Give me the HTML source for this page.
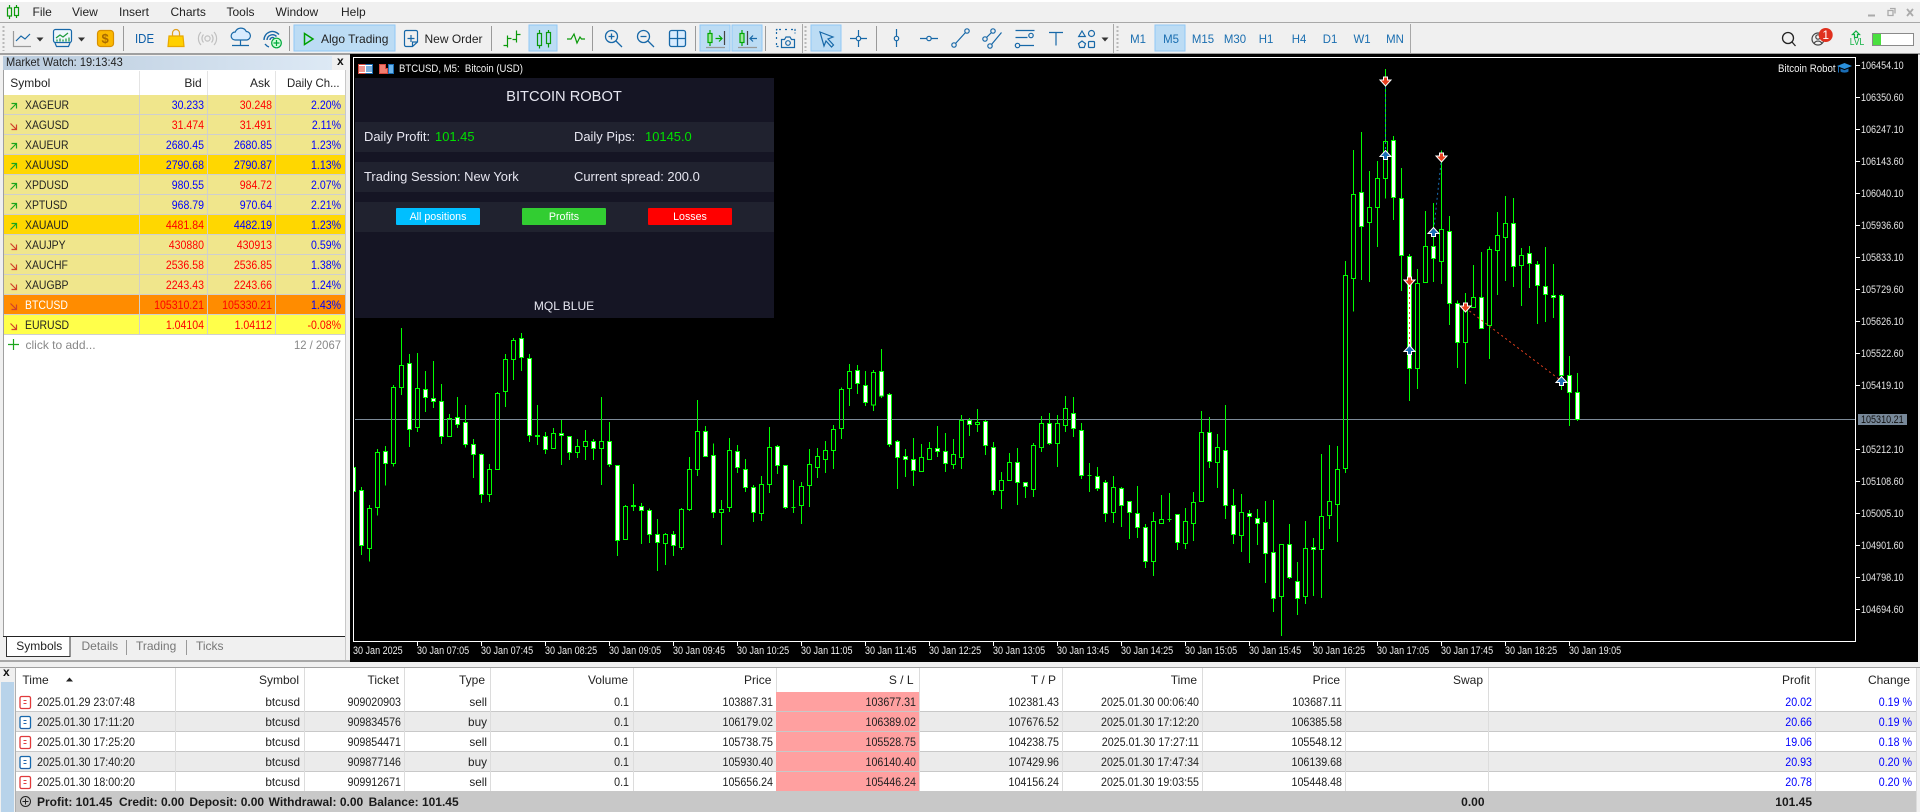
<!DOCTYPE html>
<html><head><meta charset="utf-8"><title>MetaTrader</title>
<style>
html,body{margin:0;padding:0;background:#f0f0f0}
body{position:relative;width:1920px;height:812px;overflow:hidden;font:12px "Liberation Sans",sans-serif;color:#222}
svg.g{position:absolute;left:0;top:0}
i{position:absolute;font-style:normal;white-space:nowrap;line-height:20px;height:20px;transform:scaleX(var(--s,1));transform-origin:0 0}
i.e{transform:translateX(-100%) scaleX(var(--s,1));transform-origin:100% 0}
i.ct{transform:translateX(-50%) scaleX(var(--s,1));transform-origin:50% 0}
.rw{position:absolute;left:0;width:1920px;height:20px}
.u{color:#0000ff}.d{color:#ff0000}
.m i{--s:.88}
.m .y{left:25px;--s:.87}
.c1{left:203.7px}.c2{left:272px}.c3{left:341px}
.t i{--s:.89}
.t0{left:37px}.t1{left:300.4px;--s:.98!important}.t2{left:401px}.t3{left:487px;--s:.98!important}.t4{left:629px}.t5{left:773px}.t6{left:916px}.t7{left:1059px}.t8{left:1199px}.t9{left:1341.6px}.t10{left:1812px}.t11{left:1912px}
.x{top:643.5px;line-height:14px;height:14px;font-size:11px;--s:.82;color:#eee}
.p{left:1861px;line-height:14px;height:14px;font-size:11px;--s:.82;color:#e4e4e4}
.h{top:670px;color:#222}
.tf{top:29px;color:#1a6eb0;--s:.95}
.pn{font-size:13.33px;color:#e6e6f0;--s:.97}
.gn{color:#00e000}
.btn{font-size:10.67px;color:#fff;top:206.5px}
.f{top:792px;font-weight:bold;color:#1a1a1a}
.tb{top:29px;color:#222}
.mn{top:2px;color:#222}
</style></head><body>
<svg class="g" width="1920" height="812" viewBox="0 0 1920 812" xmlns="http://www.w3.org/2000/svg">
<defs>
<linearGradient id="tg" x1="0" x2="1" y1="0" y2="0"><stop offset="0" stop-color="#b9cbdd"/><stop offset="1" stop-color="#dde9f5"/></linearGradient>
<path id="mdn" d="M-2-4.5h4v3h3.5L0 4.5-5.5-1.5H-2z" fill="#e8401f" stroke="#fff"/>
<path id="mup" d="M-2 4.5h4v-3h3.5L0-4.5-5.5 1.5H-2z" fill="#1a6db5" stroke="#fff"/>
</defs>
<!-- chrome -->
<rect width="1920" height="812" fill="#f0f0f0"/>
<rect width="1920" height="2" fill="#fff"/>
<rect y="22" width="1920" height="1" fill="#a8a8a8"/>
<rect y="53" width="1920" height="2" fill="#a0a0a0"/>
<rect x="294" y="25" width="101" height="26" fill="#bcdcf4" stroke="#90c8f6"/>
<rect x="529" y="25" width="28" height="26" fill="#bcdcf4" stroke="#90c8f6"/>
<rect x="700" y="25" width="30" height="26" fill="#bcdcf4" stroke="#90c8f6"/>
<rect x="732" y="25" width="30" height="26" fill="#bcdcf4" stroke="#90c8f6"/>
<rect x="811" y="25" width="30" height="26" fill="#bcdcf4" stroke="#90c8f6"/>
<rect x="1155" y="25" width="30" height="26" fill="#bcdcf4" stroke="#90c8f6"/>
<path d="M123.5 26v25M289.5 26v25M491.5 26v25M592.5 26v25M695.5 26v25M765.5 26v25M876.5 26v25" stroke="#9a9a9a" fill="none"/>
<path d="M802.5 24v29M1113.5 24v29M1410.5 24v29" stroke="#a8a8a8" fill="none"/>
<path d="M3.5 26v25M805.5 26v25M1117.5 26v25" stroke="#b8b8b8" stroke-width="2" stroke-dasharray="2 2" fill="none"/>
<!-- left panel -->
<rect x="3" y="56" width="329" height="14" fill="url(#tg)"/>
<rect x="3" y="70" width="343" height="566" fill="#fff"/>
<rect x="3" y="70" width="1" height="566" fill="#a0a0a0"/>
<rect x="345" y="70" width="1" height="590" fill="#c8c8c8"/>
<rect x="139" y="71" width="1" height="24" fill="#e4e4e4"/><rect x="207" y="71" width="1" height="24" fill="#e4e4e4"/><rect x="275" y="71" width="1" height="24" fill="#e4e4e4"/>
<g shape-rendering="crispEdges">
<rect x="4" y="95" width="341" height="240" fill="#f0e68c"/>
<rect x="4" y="155" width="341" height="20" fill="#ffd700"/>
<rect x="4" y="215" width="341" height="20" fill="#ffd700"/>
<rect x="4" y="295" width="341" height="20" fill="#ff8c00"/>
<rect x="4" y="315" width="341" height="20" fill="#ffff4a"/>
<path d="M4 114.5h341M4 134.5h341M4 154.5h341M4 174.5h341M4 194.5h341M4 214.5h341M4 234.5h341M4 254.5h341M4 274.5h341M4 294.5h341M4 314.5h341M4 334.5h341M139.5 95v240M207.5 95v240M275.5 95v240" stroke="#cfcfcf" fill="none"/>
</g>
<g fill="none" stroke-width="1.2">
<path stroke="#1ca51c" d="M10.5 109.5l6-6M11.5 103.5h5v5M10.5 169.5l6-6M11.5 163.5h5v5M10.5 229.5l6-6M11.5 223.5h5v5M10.5 149.5l6-6M11.5 143.5h5v5M10.5 189.5l6-6M11.5 183.5h5v5M10.5 209.5l6-6M11.5 203.5h5v5"/>
<path stroke="#d0412a" d="M10.5 123.5l6 6M11.5 129.5h5v-5M10.5 243.5l6 6M11.5 249.5h5v-5M10.5 263.5l6 6M11.5 269.5h5v-5M10.5 283.5l6 6M11.5 289.5h5v-5M10.5 303.5l6 6M11.5 309.5h5v-5M10.5 323.5l6 6M11.5 329.5h5v-5"/>
</g>
<path d="M13.5 339v11M8 344.5h11" stroke="#1ca51c" fill="none" stroke-width="1.2"/>
<!-- tabs -->
<rect x="3" y="636" width="342" height="1" fill="#222"/>
<rect x="7" y="637" width="63" height="19" fill="#fff"/>
<path d="M6.5 636v20.5h63.5V636" stroke="#333" fill="none"/>
<path d="M126.5 640v15M186.5 640v15" stroke="#999"/>
<rect x="0" y="660" width="350" height="2" fill="#a8a8a8"/>
<!-- chart -->
<rect x="350" y="54" width="1568" height="608" fill="#000"/>
<rect x="355" y="419" width="1500" height="1" fill="#7c8a98"/>
<g transform="translate(352,310) scale(.333333)" shape-rendering="crispEdges">
<path stroke="#00ff00" stroke-width="3" fill="none" d="M28.5 531V735M52.5 585V755M76.5 417V617M100.5 408V527M124.5 225V470M148.5 54V255M172.5 132V411M196.5 129V366M220.5 183V306M244.5 153V294M268.5 222V402M292.5 312V380M316.5 261V354M340.5 285V413M364.5 387V504M388.5 430V579M412.5 462V576M436.5 246V479M460.5 132V291M484.5 84V210M508.5 69V183M532.5 132V396M556.5 285V405M580.5 366V432M604.5 354V416M628.5 330V465M652.5 379V450M676.5 387V444M700.5 360V450M724.5 387V450M748.5 261V525M772.5 336V471M796.5 466V738M820.5 585V689M844.5 522V603M868.5 579V702M892.5 595V699M916.5 627V783M940.5 669V765M964.5 663V738M988.5 594V720M1012.5 441V603M1036.5 270V498M1060.5 348V440M1084.5 400V624M1108.5 570V705M1132.5 384V606M1156.5 405V489M1180.5 447V546M1204.5 525V636M1228.5 498V633M1252.5 351V549M1276.5 405V492M1300.5 466V597M1324.5 510V609M1348.5 516V642M1372.5 417V591M1396.5 414V504M1420.5 393V489M1444.5 345V477M1468.5 232V387M1492.5 162V288M1516.5 165V252M1540.5 183V288M1564.5 180V303M1588.5 117V264M1612.5 249V411M1636.5 390V537M1660.5 417V501M1684.5 384V528M1708.5 402V485M1732.5 396V449M1756.5 348V441M1780.5 369V486M1804.5 387V477M1828.5 315V477M1852.5 324V378M1876.5 297V366M1900.5 330V435M1924.5 396V555M1948.5 486V597M1972.5 429V512M1996.5 414V585M2020.5 517V564M2044.5 399V561M2068.5 318V426M2092.5 309V405M2116.5 315V471M2140.5 258V366M2164.5 261V381M2188.5 339V507M2212.5 459V546M2236.5 471V543M2260.5 510V636M2284.5 498V639M2308.5 531V651M2332.5 574V687M2356.5 528V684M2380.5 642V774M2404.5 606V798M2428.5 555V641M2452.5 549V636M2476.5 613V720M2500.5 594V717M2524.5 546V693M2548.5 303V575M2572.5 321V474M2596.5 372V534M2620.5 285V627M2644.5 537V702M2668.5 552V726M2692.5 600V759M2716.5 597V705M2740.5 573V819M2764.5 570V906M2788.5 703V978M2812.5 642V807M2836.5 756V915M2860.5 633V882M2884.5 684V858M2908.5 432V864M2932.5 405V657M2956.5 408V696M2980.5 -147V489M3004.5 -480V5M3028.5 -534V-90M3052.5 -417V-84M3076.5 -447V-189M3100.5 -723V-335M3124.5 -522V-270M3148.5 -426V-57M3172.5 -168V273M3196.5 -123V237M3220.5 -297V-82M3244.5 -321V-84M3268.5 -479V-78M3292.5 -282V45M3316.5 -29V174M3340.5 -51V222M3364.5 -135V-8M3388.5 -174V55M3412.5 -191V147M3436.5 -294V-45M3460.5 -342V-87M3484.5 -336V-69M3508.5 -186V-12M3532.5 -192V-66M3556.5 -147V42M3580.5 -189V36M3604.5 -138V24M3628.5 -48V240M3652.5 138V348M3676.5 189V333"/>
<path fill="#000" stroke="#00ff00" stroke-width="3" d="M46.5 595h12V716h-12zM70.5 427h12V593h-12zM118.5 232h12V461h-12zM142.5 166h12V233h-12zM190.5 235h12V353h-12zM286.5 325h12V380h-12zM406.5 478h12V554h-12zM430.5 250h12V479h-12zM454.5 148h12V245h-12zM478.5 91h12V149h-12zM598.5 370h12V416h-12zM670.5 409h12V428h-12zM694.5 394h12V410h-12zM742.5 394h12V416h-12zM814.5 589h12V689h-12zM934.5 673h12V701h-12zM982.5 598h12V713h-12zM1006.5 478h12V599h-12zM1030.5 364h12V479h-12zM1102.5 598h12V608h-12zM1126.5 421h12V593h-12zM1222.5 523h12V611h-12zM1246.5 412h12V524h-12zM1342.5 529h12V587h-12zM1366.5 463h12V527h-12zM1390.5 439h12V473h-12zM1414.5 421h12V449h-12zM1438.5 358h12V422h-12zM1462.5 238h12V356h-12zM1486.5 184h12V236h-12zM1558.5 187h12V285h-12zM1702.5 442h12V485h-12zM1726.5 415h12V449h-12zM1798.5 433h12V464h-12zM1822.5 331h12V443h-12zM1870.5 337h12V344h-12zM1942.5 511h12V542h-12zM1966.5 457h12V512h-12zM2038.5 406h12V539h-12zM2062.5 340h12V413h-12zM2110.5 340h12V401h-12zM2134.5 295h12V347h-12zM2278.5 532h12V608h-12zM2398.5 634h12V755h-12zM2422.5 628h12V641h-12zM2494.5 634h12V701h-12zM2518.5 577h12V641h-12zM2542.5 367h12V575h-12zM2590.5 412h12V458h-12zM2662.5 607h12V677h-12zM2782.5 703h12V860h-12zM2854.5 715h12V860h-12zM2902.5 619h12V719h-12zM2926.5 574h12V617h-12zM2950.5 478h12V584h-12zM2974.5 -104h12V476h-12zM2998.5 -347h12V-95h-12zM3046.5 -308h12V-263h-12zM3070.5 -395h12V-307h-12zM3094.5 -506h12V-395h-12zM3190.5 -80h12V175h-12zM3214.5 -191h12V-82h-12zM3262.5 -242h12V-146h-12zM3334.5 -8h12V97h-12zM3358.5 -38h12V-8h-12zM3406.5 -182h12V46h-12zM3430.5 -224h12V-179h-12zM3454.5 -260h12V-218h-12zM3502.5 -164h12V-134h-12z"/>
<path d="M120 328.5h9M192 328.5h9M288 328.5h9M432 328.5h9M1464 328.5h9M2136 328.5h9M2976 328.5h9" stroke="#7c8a98" stroke-width="3" fill="none"/>
<path fill="#fff" stroke="#00ff00" stroke-width="3" d="M-1.5 472h12V544h-12zM22.5 541h12V707h-12zM94.5 424h12V461h-12zM166.5 160h12V359h-12zM214.5 238h12V263h-12zM238.5 265h12V275h-12zM262.5 274h12V380h-12zM310.5 322h12V344h-12zM334.5 337h12V404h-12zM358.5 403h12V434h-12zM382.5 433h12V554h-12zM502.5 85h12V143h-12zM526.5 145h12V377h-12zM550.5 376h12V380h-12zM574.5 379h12V419h-12zM622.5 370h12V377h-12zM646.5 379h12V428h-12zM718.5 394h12V416h-12zM766.5 394h12V464h-12zM790.5 466h12V692h-12zM838.5 586h12V590h-12zM862.5 589h12V602h-12zM886.5 601h12V674h-12zM910.5 673h12V698h-12zM958.5 673h12V707h-12zM1054.5 364h12V440h-12zM1078.5 436h12V608h-12zM1150.5 424h12V473h-12zM1174.5 478h12V533h-12zM1198.5 532h12V608h-12zM1270.5 409h12V467h-12zM1294.5 466h12V593h-12zM1318.5 592h12V592h-12zM1510.5 181h12V221h-12zM1534.5 226h12V278h-12zM1582.5 184h12V258h-12zM1606.5 253h12V404h-12zM1630.5 394h12V443h-12zM1654.5 439h12V449h-12zM1678.5 448h12V482h-12zM1750.5 415h12V425h-12zM1774.5 424h12V461h-12zM1846.5 331h12V344h-12zM1894.5 334h12V407h-12zM1918.5 412h12V542h-12zM1990.5 457h12V518h-12zM2014.5 517h12V530h-12zM2086.5 340h12V401h-12zM2158.5 310h12V356h-12zM2182.5 361h12V497h-12zM2206.5 496h12V496h-12zM2230.5 499h12V536h-12zM2254.5 517h12V611h-12zM2302.5 535h12V587h-12zM2326.5 574h12V608h-12zM2350.5 610h12V653h-12zM2374.5 652h12V755h-12zM2446.5 629h12V629h-12zM2470.5 613h12V698h-12zM2566.5 367h12V455h-12zM2614.5 421h12V587h-12zM2638.5 586h12V674h-12zM2686.5 610h12V620h-12zM2710.5 625h12V641h-12zM2734.5 637h12V731h-12zM2758.5 727h12V866h-12zM2806.5 703h12V803h-12zM2830.5 814h12V866h-12zM2878.5 712h12V719h-12zM3022.5 -353h12V-251h-12zM3118.5 -509h12V-337h-12zM3142.5 -335h12V-163h-12zM3166.5 -161h12V175h-12zM3238.5 -191h12V-155h-12zM3286.5 -236h12V-20h-12zM3310.5 -20h12V97h-12zM3382.5 -38h12V55h-12zM3478.5 -260h12V-131h-12zM3526.5 -170h12V-140h-12zM3550.5 -137h12V-74h-12zM3574.5 -71h12V-47h-12zM3598.5 -44h12V-38h-12zM3622.5 -44h12V196h-12zM3646.5 196h12V247h-12zM3670.5 248h12V329h-12z"/>
</g>
<!-- trades -->
<g fill="none" stroke-dasharray="2 3">
<path stroke="#1a6db5" d="M1385.5 82V155M1441.5 158L1433.5 232"/>
<path stroke="#e8401f" d="M1409.5 282V350M1465.5 308L1561.5 381"/>
</g>
<use href="#mdn" x="1385.5" y="81.5"/><use href="#mup" x="1385.5" y="155"/>
<use href="#mdn" x="1441.5" y="157.5"/><use href="#mup" x="1433.5" y="232"/>
<use href="#mdn" x="1409.5" y="281.5"/><use href="#mup" x="1409.5" y="350"/>
<use href="#mdn" x="1465.5" y="307.5"/><use href="#mup" x="1561.5" y="381"/>
<rect x="350" y="54" width="4" height="608" fill="#000"/>
<rect x="353.5" y="57.5" width="1502" height="584" fill="none" stroke="#fff"/>
<path stroke="#fff" fill="none" d="M1856 65.5h4M1856 97.5h4M1856 129.5h4M1856 161.5h4M1856 193.5h4M1856 225.5h4M1856 257.5h4M1856 289.5h4M1856 321.5h4M1856 353.5h4M1856 385.5h4M1856 449.5h4M1856 481.5h4M1856 513.5h4M1856 545.5h4M1856 577.5h4M1856 609.5h4M417.5 642v4M481.5 642v4M545.5 642v4M609.5 642v4M673.5 642v4M737.5 642v4M801.5 642v4M865.5 642v4M929.5 642v4M993.5 642v4M1057.5 642v4M1121.5 642v4M1185.5 642v4M1249.5 642v4M1313.5 642v4M1377.5 642v4M1441.5 642v4M1505.5 642v4M1569.5 642v4"/>
<rect x="1858" y="414" width="49" height="11" fill="#778899"/>
<!-- panel -->
<rect x="355" y="78" width="419" height="240" fill="#151524"/>
<rect x="355" y="122" width="419" height="30" fill="#20222f"/>
<rect x="355" y="162" width="419" height="30" fill="#20222f"/>
<rect x="355" y="202" width="419" height="30" fill="#20222f"/>
<rect x="396" y="208" width="84" height="17" rx="1" fill="#00bfff"/>
<rect x="522" y="208" width="84" height="17" rx="1" fill="#32cd32"/>
<rect x="648" y="208" width="84" height="17" rx="1" fill="#ff0000"/>
<!-- chart title icons -->
<rect x="358.5" y="64.5" width="14" height="9" fill="#fff" stroke="#d84a3e"/>
<path d="M365.5 64.5h7v9h-7" fill="#fff" stroke="#1a6db5"/>
<path d="M359 67h6M359 69h6M359 71h6" stroke="#e8584a" stroke-width="1.2"/><path d="M366 67h6M366 69h6M366 71h6" stroke="#2a80c8" stroke-width="1.2"/>
<path d="M379.5 64.5h6v4h2v5h-8z" fill="#f27e70" stroke="#d84a3e"/>
<path d="M388.5 64.5h5v9h-5z" fill="#6ab4ec" stroke="#1a6db5"/>
<path d="M1837 66l7.5-3 7.5 3-7.5 3z" fill="#2a90dc"/><path d="M1840.5 68.5v3c2 1.5 6 1.5 8 0v-3l-4 1.6z" fill="#1a6db5"/><path d="M1838.5 66.5v6" stroke="#1a6db5"/>
<!-- bottom panel -->
<rect x="0" y="667" width="1920" height="1" fill="#a0a0a0"/>
<rect x="15" y="668" width="1902" height="144" fill="#fff"/>
<rect x="15" y="667" width="1" height="145" fill="#b0b0b0"/>
<rect x="1" y="682" width="13" height="130" fill="#b8d3ea"/>
<g shape-rendering="crispEdges">
<rect x="16" y="712" width="1900" height="20" fill="#ebebeb"/>
<rect x="16" y="752" width="1900" height="20" fill="#ebebeb"/>
<rect x="776" y="692" width="144" height="99" fill="#ffa0a0"/>
<path d="M16 711.5h1900M16 731.5h1900M16 751.5h1900M16 771.5h1900" stroke="#c8c8c8"/>
<path d="M175.5 668v123M304.5 668v123M404.5 668v123M490.5 668v123M633.5 668v123M776.5 668v24M919.5 668v123M1062.5 668v123M1202.5 668v123M1345.5 668v123M1488.5 668v123M1815.5 668v123M1916.5 668v144" stroke="#dcdcdc"/>
<rect x="16" y="791" width="1900" height="21" fill="#c8c8c8"/>
</g>
<path d="M66 681.5l3.5-4 3.5 4z" fill="#222"/>
<g fill="#fff" stroke-width="1.3">
<g stroke="#e03a3a"><rect x="20" y="696.5" width="10.5" height="12" rx="1.5"/><rect x="20" y="736.5" width="10.5" height="12" rx="1.5"/><rect x="20" y="776.5" width="10.5" height="12" rx="1.5"/></g>
<g stroke="#1668ac"><rect x="20" y="716.5" width="10.5" height="12" rx="1.5"/><rect x="20" y="756.5" width="10.5" height="12" rx="1.5"/></g>
</g>
<path d="M23.5 700.5h3M23.5 703.5h3M23.5 740.5h3M23.5 743.5h3M23.5 780.5h3M23.5 783.5h3" stroke="#e03a3a"/>
<path d="M23.5 720.5h3M23.5 723.5h3M23.5 760.5h3M23.5 763.5h3" stroke="#1668ac"/>
<circle cx="25.5" cy="801.5" r="5" fill="none" stroke="#222"/><path d="M25.5 798.5v6M22.5 801.5h6" stroke="#222"/>
<!-- toolbar icons -->
<g fill="none" stroke-width="1.2">
<g stroke="#0a9a0a"><rect x="7.5" y="8" width="4" height="8"/><path d="M9.5 5v3M9.5 16v3"/><rect x="14.5" y="7.5" width="4" height="8"/><path d="M16.5 5v3M16.5 15v3"/></g>
<path d="M13.5 31v15.500H31" stroke="#9a9a9a"/><path d="M16 41l5-5 4 3 5-5" stroke="#1768a8"/>
<rect x="53.500" y="29.500" width="18" height="13" rx="2" fill="#eef6fc" stroke="#1768a8"/><path d="M55 43l1.500 3.500h12L70 43" stroke="#1768a8"/><path d="M56 38l4-3 3 2 5-4" stroke="#1a9a3a"/><path d="M57 41.500v-2M60 41.500v-3M63 41.500v-2M66 41.500v-3M69 41.500v-4" stroke="#1a9a3a"/>
<rect x="97.500" y="30.500" width="16" height="16" rx="3" fill="#fbb900" stroke="#d89000"/>
<path d="M169 36h14l1 10.500h-16z" fill="#ffd000" stroke="#e8a800"/><path d="M172.500 36v-3a3.500 3.500 0 0 1 7 0v3" stroke="#e0a020"/>
<g stroke="#c0c0c0"><circle cx="207.500" cy="38.500" r="2.600"/><path d="M203.500 34.500a6 6 0 0 0 0 8M211.500 34.500a6 6 0 0 1 0 8M201 32a9.500 9.500 0 0 0 0 13M214 32a9.500 9.500 0 0 1 0 13"/></g>
<path d="M235 40a4 4 0 0 1 .3-8 6 6 0 0 1 11-.5 4.300 4.300 0 0 1 .7 8.500z" fill="#d8ecff" stroke="#1768a8"/><path d="M240.500 40v5M232 45.500h17" stroke="#1768a8"/>
<path d="M264 40a8.500 8.500 0 0 1 15-5.500M267 40a5.500 5.500 0 0 1 9.500-3.500M270 40a2.500 2.500 0 0 1 4.200-1.800M265 44a9 9 0 0 0 4 3" stroke="#1768a8" stroke-width="1.400"/>
<circle cx="276.500" cy="43" r="4.800" fill="#d0ffd8" stroke="#00a83c"/><path d="M276.500 40v6M273.500 43h6" stroke="#00a83c"/>
<path d="M304.500 33.500v11l8.500-5.500z" stroke="#00a000" stroke-width="1.500"/>
<path d="M406 30.500h10a1.500 1.500 0 0 1 1.500 1.500v10l-5 4.500H406a1.500 1.500 0 0 1-1.500-1.500V32a1.500 1.500 0 0 1 1.500-1.500zM412.500 46.500v-4.500h5M411 35v7M407.500 38.500h7" stroke="#1768a8"/>
<g stroke="#0a9a0a"><path d="M507.500 35.500v12M503.500 45.500h4M507.500 38.500h4M516.500 30.500v12M512.500 39.500h4M516.500 34.500h4"/>
<rect x="537.500" y="33.500" width="4" height="12"/><path d="M539.500 30v3.500M539.500 45.500v3"/><rect x="546.500" y="32.500" width="4" height="11"/><path d="M548.500 30v2.500M548.500 43.500v4"/>
<path d="M567 39h4l3-5 3 9 3-6 1.500 2h3.500"/></g>
<g stroke="#1768a8" stroke-width="1.300"><circle cx="611.500" cy="36.500" r="6"/><path d="M616 41l6 6M608.500 36.500h6M611.500 33.500v6"/><circle cx="643.500" cy="36.500" r="6"/><path d="M648 41l6 6M640.500 36.500h6"/>
<rect x="669.500" y="30.500" width="16" height="16" rx="2" fill="#d8ecff"/><path d="M677.500 30.500v16M669.500 38.500h16"/></g>
<g stroke="#00a800"><rect x="708" y="33.500" width="4" height="9" fill="#9ee89e"/><path d="M710 30v3.500M710 42.500v3.500M715.500 38.500h6M719 35.500l3 3-3 3"/><rect x="740" y="33.500" width="4" height="9" fill="#9ee89e"/><path d="M742 30v3.500M742 42.500v3.500"/></g>
<path d="M724.500 31v14M747.500 31v14" stroke="#444"/><path d="M750 38.500h7M753 35.500l-3 3 3 3" stroke="#1768a8"/>
<path d="M706 47.500h19M738 47.500h19" stroke="#999"/>
<g stroke="#1768a8" stroke-width="1.200">
<path d="M776.500 34v-4.500H781M785 29.500h3M791 29.500h4v4M776.500 37v3M776.500 43v3.500h3" stroke-dasharray="2 1.500"/>
<path d="M781.500 39.500h3l1.500-2.500h4l1.500 2.500h3v8h-13z" fill="#f0f0f0"/><circle cx="788" cy="43" r="2.300"/>
<path d="M820 32l13 5-5 2 5.500 6-2 2-5.500-6-2 5z"/>
<path d="M858.500 30v6.500M858.500 41v6M850 38.500h6.500M861 38.500h6"/><circle cx="858.500" cy="38.500" r="2.200"/>
<path d="M896.500 29v7M896.500 41v6M920 38.500h7M931 38.500h7"/><circle cx="896.500" cy="38.500" r="2.200"/><circle cx="929" cy="38.500" r="2.200"/>
<path d="M955.500 43.500L965.500 32.500"/><circle cx="954" cy="45" r="2.200"/><circle cx="967" cy="31" r="2.200"/>
<path d="M986.500 37.500l5-5M991.500 44.500l10-12"/><circle cx="985" cy="39" r="2.200"/><circle cx="993" cy="31" r="2.200"/><circle cx="990" cy="46" r="2.200"/>
<path d="M1015.500 30.500h19M1015.500 37.500h12M1020 45.500h14"/><circle cx="1031" cy="35.500" r="2.200"/><circle cx="1017.500" cy="45.500" r="2.200"/>
<path d="M1049 32.500h14M1056 32.500v13"/>
<path d="M1082 31l3.300 5.500h-6.600z"/><circle cx="1091.500" cy="33.500" r="3"/><path d="M1082 41l3.500 2.600-1.300 3.900h-4.400l-1.300-3.900z"/><rect x="1088.500" y="41.500" width="6" height="6" rx="1"/>
</g>
<g stroke="#222" stroke-width="1.300"><circle cx="1788" cy="38" r="5.500"/><path d="M1792 42l3.500 4"/></g>
<g stroke="#444" stroke-width="1.200"><circle cx="1818" cy="39" r="6"/><circle cx="1818" cy="37" r="2.200"/><path d="M1814 43.500a4.500 4.500 0 0 1 8 0"/></g>
<path d="M1856 31l3.500 3.500h-2v3h-3v-3h-2z" stroke="#0db040" stroke-width="1.200"/>
<path d="M1868 15.500h7" stroke="#aaa" stroke-width="2"/>
<path d="M1888 10.500h5v5h-5zM1890 8.500h5v5" stroke="#aaa" stroke-width="1.300"/>
<path d="M1907 9l6 7M1913 9l-6 7" stroke="#aaa" stroke-width="1.800"/>
</g>
<path d="M36.500 37.500h7l-3.500 4zM78 37.500h7l-3.500 4zM1101.500 37.500h7l-3.500 4z" fill="#333"/>
<circle cx="1825.700" cy="35" r="7" fill="#e0301e"/>
<rect x="1872.500" y="33.500" width="41" height="12" fill="#fff" stroke="#8a8a8a"/><rect x="1873" y="34" width="8" height="11" fill="#4ae03f"/>
</svg>

<!-- menu -->
<i class="mn" style="left:32.500px">File</i><i class="mn" style="left:72px">View</i><i class="mn" style="left:119px">Insert</i><i class="mn" style="left:170.500px">Charts</i><i class="mn" style="left:226.500px">Tools</i><i class="mn" style="left:275.500px">Window</i><i class="mn" style="left:341px">Help</i>
<!-- toolbar text -->
<i style="left:101.500px;top:29px;font-weight:bold;font-size:13px;color:#a86a00">$</i>
<i style="left:134.500px;top:29px;color:#0c5ea8;font-size:13px;--s:.88">IDE</i>
<i class="tb" style="left:321px">Algo Trading</i>
<i class="tb" style="left:424.500px">New Order</i>
<i class="tf ct" style="left:1138px">M1</i><i class="tf ct" style="left:1170.500px">M5</i><i class="tf ct" style="left:1202.500px">M15</i><i class="tf ct" style="left:1234.500px">M30</i><i class="tf ct" style="left:1266px">H1</i><i class="tf ct" style="left:1298.500px">H4</i><i class="tf ct" style="left:1330px">D1</i><i class="tf ct" style="left:1362px">W1</i><i class="tf ct" style="left:1394.500px">MN</i>
<i class="ct" style="left:1825.700px;top:25px;color:#fff">1</i>
<i class="ct" style="left:1856.500px;top:33px;color:#0db040;font-size:10px;--s:.85">LVL</i>
<!-- market watch -->
<i style="left:5.700px;top:52px;--s:.92;color:#222">Market Watch: 19:13:43</i>
<i style="left:337px;top:51px;font-weight:bold;font-size:12px;color:#111">x</i>
<i style="left:10.300px;top:73px">Symbol</i><i class="e" style="left:201.700px;top:73px">Bid</i><i class="e" style="left:270px;top:73px">Ask</i><i style="left:286.700px;top:73px;--s:.95">Daily Ch...</i>
<div class="m">
<div class="rw" style="top:95px"><i class="y">XAGEUR</i><i class="e c1 u">30.233</i><i class="e c2 d">30.248</i><i class="e c3 u">2.20%</i></div>
<div class="rw" style="top:115px"><i class="y">XAGUSD</i><i class="e c1 d">31.474</i><i class="e c2 d">31.491</i><i class="e c3 u">2.11%</i></div>
<div class="rw" style="top:135px"><i class="y">XAUEUR</i><i class="e c1 u">2680.45</i><i class="e c2 u">2680.85</i><i class="e c3 u">1.23%</i></div>
<div class="rw" style="top:155px"><i class="y">XAUUSD</i><i class="e c1 u">2790.68</i><i class="e c2 u">2790.87</i><i class="e c3 u">1.13%</i></div>
<div class="rw" style="top:175px"><i class="y">XPDUSD</i><i class="e c1 u">980.55</i><i class="e c2 d">984.72</i><i class="e c3 u">2.07%</i></div>
<div class="rw" style="top:195px"><i class="y">XPTUSD</i><i class="e c1 u">968.79</i><i class="e c2 u">970.64</i><i class="e c3 u">2.21%</i></div>
<div class="rw" style="top:215px"><i class="y">XAUAUD</i><i class="e c1 d">4481.84</i><i class="e c2 u">4482.19</i><i class="e c3 u">1.23%</i></div>
<div class="rw" style="top:235px"><i class="y">XAUJPY</i><i class="e c1 d">430880</i><i class="e c2 d">430913</i><i class="e c3 u">0.59%</i></div>
<div class="rw" style="top:255px"><i class="y">XAUCHF</i><i class="e c1 d">2536.58</i><i class="e c2 d">2536.85</i><i class="e c3 u">1.38%</i></div>
<div class="rw" style="top:275px"><i class="y">XAUGBP</i><i class="e c1 d">2243.43</i><i class="e c2 d">2243.66</i><i class="e c3 u">1.24%</i></div>
<div class="rw" style="top:295px"><i class="y" style="color:#fff">BTCUSD</i><i class="e c1 d">105310.21</i><i class="e c2 d">105330.21</i><i class="e c3 u">1.43%</i></div>
<div class="rw" style="top:315px"><i class="y">EURUSD</i><i class="e c1 d">1.04104</i><i class="e c2 d">1.04112</i><i class="e c3 d">-0.08%</i></div>
<div class="rw" style="top:335px"><i style="left:25.500px;--s:1;color:#888">click to add...</i><i class="e c3" style="color:#888;--s:.94">12 / 2067</i></div>
</div>
<i style="left:16.300px;top:636px">Symbols</i><i style="left:81.500px;top:636px;color:#777">Details</i><i style="left:136px;top:636px;color:#777">Trading</i><i style="left:196px;top:636px;color:#777">Ticks</i>
<!-- chart text -->
<i style="left:399.300px;top:59px;font-size:11px;color:#f4f4f4;--s:.87">BTCUSD, M5:&nbsp; Bitcoin (USD)</i>
<i style="left:1778px;top:59px;font-size:11px;color:#f0f0f0;--s:.88">Bitcoin Robot</i>
<i class="ct" style="left:564px;top:87px;font-size:14.670px;color:#e6e6f0">BITCOIN ROBOT</i>
<i class="pn" style="left:364px;top:127px">Daily Profit:</i><i class="pn gn" style="left:435px;top:127px;color:#00e000">101.45</i><i class="pn" style="left:574px;top:127px">Daily Pips:</i><i class="pn gn" style="left:645px;top:127px;color:#00e000">10145.0</i>
<i class="pn" style="left:363.700px;top:167px">Trading Session: New York</i><i class="pn" style="left:574px;top:167px">Current spread: 200.0</i>
<i class="btn ct" style="left:438px">All positions</i><i class="btn ct" style="left:564px">Profits</i><i class="btn ct" style="left:690px">Losses</i>
<i class="ct" style="left:564px;top:296px;color:#e6e6f0">MQL BLUE</i>
<i class="p" style="top:58.700px">106454.10</i><i class="p" style="top:90.700px">106350.60</i><i class="p" style="top:122.700px">106247.10</i><i class="p" style="top:154.700px">106143.60</i><i class="p" style="top:186.700px">106040.10</i><i class="p" style="top:218.700px">105936.60</i><i class="p" style="top:250.700px">105833.10</i><i class="p" style="top:282.700px">105729.60</i><i class="p" style="top:314.700px">105626.10</i><i class="p" style="top:346.700px">105522.60</i><i class="p" style="top:378.700px">105419.10</i><i class="p" style="top:412.700px;color:#111">105310.21</i><i class="p" style="top:442.700px">105212.10</i><i class="p" style="top:474.700px">105108.60</i><i class="p" style="top:506.700px">105005.10</i><i class="p" style="top:538.700px">104901.60</i><i class="p" style="top:570.700px">104798.10</i><i class="p" style="top:602.700px">104694.60</i>
<i class="x" style="left:352.500px">30 Jan 2025</i><i class="x" style="left:417px">30 Jan 07:05</i><i class="x" style="left:481px">30 Jan 07:45</i><i class="x" style="left:545px">30 Jan 08:25</i><i class="x" style="left:609px">30 Jan 09:05</i><i class="x" style="left:673px">30 Jan 09:45</i><i class="x" style="left:737px">30 Jan 10:25</i><i class="x" style="left:801px">30 Jan 11:05</i><i class="x" style="left:865px">30 Jan 11:45</i><i class="x" style="left:929px">30 Jan 12:25</i><i class="x" style="left:993px">30 Jan 13:05</i><i class="x" style="left:1057px">30 Jan 13:45</i><i class="x" style="left:1121px">30 Jan 14:25</i><i class="x" style="left:1185px">30 Jan 15:05</i><i class="x" style="left:1249px">30 Jan 15:45</i><i class="x" style="left:1313px">30 Jan 16:25</i><i class="x" style="left:1377px">30 Jan 17:05</i><i class="x" style="left:1441px">30 Jan 17:45</i><i class="x" style="left:1505px">30 Jan 18:25</i><i class="x" style="left:1569px">30 Jan 19:05</i>
<!-- bottom table -->
<i style="left:3px;top:662px;font-weight:bold;color:#111">x</i>
<i class="h" style="left:22.400px">Time</i><i class="h e" style="left:299px">Symbol</i><i class="h e" style="left:399px">Ticket</i><i class="h e" style="left:485px">Type</i><i class="h e" style="left:628px">Volume</i><i class="h e" style="left:771.400px">Price</i><i class="h e" style="left:913.500px">S / L</i><i class="h e" style="left:1056px">T / P</i><i class="h e" style="left:1197px">Time</i><i class="h e" style="left:1340px">Price</i><i class="h e" style="left:1483px">Swap</i><i class="h e" style="left:1810px">Profit</i><i class="h e" style="left:1910px">Change</i>
<div class="t">
<div class="rw" style="top:692px"><i class="t0">2025.01.29 23:07:48</i><i class="e t1">btcusd</i><i class="e t2">909020903</i><i class="e t3">sell</i><i class="e t4">0.1</i><i class="e t5">103887.31</i><i class="e t6">103677.31</i><i class="e t7">102381.43</i><i class="e t8">2025.01.30 00:06:40</i><i class="e t9">103687.11</i><i class="e t10 u">20.02</i><i class="e t11 u">0.19 %</i></div>
<div class="rw" style="top:712px"><i class="t0">2025.01.30 17:11:20</i><i class="e t1">btcusd</i><i class="e t2">909834576</i><i class="e t3">buy</i><i class="e t4">0.1</i><i class="e t5">106179.02</i><i class="e t6">106389.02</i><i class="e t7">107676.52</i><i class="e t8">2025.01.30 17:12:20</i><i class="e t9">106385.58</i><i class="e t10 u">20.66</i><i class="e t11 u">0.19 %</i></div>
<div class="rw" style="top:732px"><i class="t0">2025.01.30 17:25:20</i><i class="e t1">btcusd</i><i class="e t2">909854471</i><i class="e t3">sell</i><i class="e t4">0.1</i><i class="e t5">105738.75</i><i class="e t6">105528.75</i><i class="e t7">104238.75</i><i class="e t8">2025.01.30 17:27:11</i><i class="e t9">105548.12</i><i class="e t10 u">19.06</i><i class="e t11 u">0.18 %</i></div>
<div class="rw" style="top:752px"><i class="t0">2025.01.30 17:40:20</i><i class="e t1">btcusd</i><i class="e t2">909877146</i><i class="e t3">buy</i><i class="e t4">0.1</i><i class="e t5">105930.40</i><i class="e t6">106140.40</i><i class="e t7">107429.96</i><i class="e t8">2025.01.30 17:47:34</i><i class="e t9">106139.68</i><i class="e t10 u">20.93</i><i class="e t11 u">0.20 %</i></div>
<div class="rw" style="top:772px"><i class="t0">2025.01.30 18:00:20</i><i class="e t1">btcusd</i><i class="e t2">909912671</i><i class="e t3">sell</i><i class="e t4">0.1</i><i class="e t5">105656.24</i><i class="e t6">105446.24</i><i class="e t7">104156.24</i><i class="e t8">2025.01.30 19:03:55</i><i class="e t9">105448.48</i><i class="e t10 u">20.78</i><i class="e t11 u">0.20 %</i></div>
</div>
<i class="f" style="left:37px">Profit: 101.45</i><i class="f" style="left:119px">Credit: 0.00</i><i class="f" style="left:189.400px">Deposit: 0.00</i><i class="f" style="left:268.600px">Withdrawal: 0.00</i><i class="f" style="left:368.600px">Balance: 101.45</i>
<i class="f e" style="left:1484.500px">0.00</i><i class="f e" style="left:1812px">101.45</i>
</body></html>
